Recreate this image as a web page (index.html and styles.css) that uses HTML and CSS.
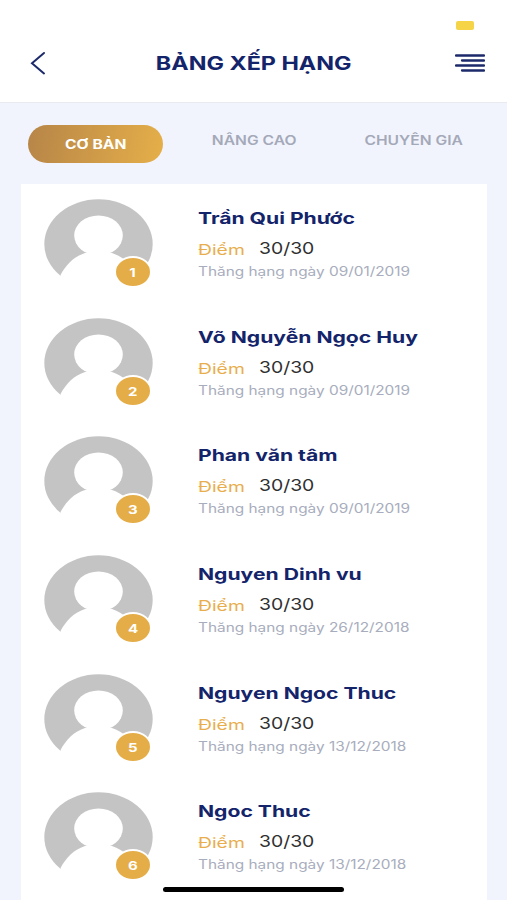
FILE: index.html
```
<!DOCTYPE html>
<html lang="vi">
<head>
    <meta charset="UTF-8">
    <title>Bảng xếp hạng</title>
    <link rel="stylesheet" href="styles.css">
</head>
<body>
    <div class="app">
        <div class="status"><span class="battery"></span></div>
        <div class="header">
            <svg class="back" width="16" height="24" viewBox="0 0 16 24"><path d="M14 2L2 12.2L14 22.4"/></svg>
            <h1><span>BẢNG XẾP HẠNG</span></h1>
            <svg class="menu" width="30" height="20" viewBox="0 0 30 20"><path d="M1 2.5H29M7 7.5H29M1 12.5H29M7 17.5H29"/></svg>
        </div>
        <div class="tabs">
            <div class="tab on"><span>CƠ BẢN</span></div>
            <div class="tab"><span>NÂNG CAO</span></div>
            <div class="tab"><span>CHUYÊN GIA</span></div>
        </div>
        <div class="list"></div>
        <div class="home-bar"></div>
    </div>
    <script>
        {
            let users = [
                    ["Trần Qui Phước", "09/01/2019"],
                    ["Võ Nguyễn Ngọc Huy", "09/01/2019"],
                    ["Phan văn tâm", "09/01/2019"],
                    ["Nguyen Dinh vu", "26/12/2018"],
                    ["Nguyen Ngoc Thuc", "13/12/2018"],
                    ["Ngoc Thuc", "13/12/2018"]
                ],
                oList = document.querySelector(".list");
            users.forEach(function (user, i) {
                oList.innerHTML += `
                <div class="row">
                    <div class="avatar">
                        <svg width="109" height="90" viewBox="0 0 109 90">
                            <ellipse class="ring" cx="54.5" cy="45" rx="54.2" ry="44.7"/>
                            <ellipse class="person" cx="54.5" cy="36.5" rx="24.3" ry="20"/>
                            <path class="person" d="M16.5 76C22 66 29 58 41 54H68C80 58 87 66 92.5 76V90H16.5Z"/>
                        </svg>
                        <span class="rank"><b>${i + 1}</b></span>
                    </div>
                    <div class="info">
                        <div class="name">${user[0]}</div>
                        <div class="score"><span class="label">Điểm</span><span class="point">30/30</span></div>
                        <div class="date">Thăng hạng ngày ${user[1]}</div>
                    </div>
                </div>`;
            });
        }
    </script>
</body>
</html>
```
FILE: styles.css
```
*{
    box-sizing: border-box;
}
body{
    margin: 0;
    font-family: Inter, "Open Sans", sans-serif;
    background-color: #f2f4fd;
}
.app{
    position: relative;
    width: 507px;
    height: 900px;
    overflow: hidden;
}
/**顶部**/
.status{
    display: flex;
    justify-content: flex-end;
    height: 40px;
    padding: 21px 33px 0 0;
    background-color: white;
}
.battery{
    width: 18px;
    height: 9px;
    border-radius: 2px;
    background-color: #f5d547;
}
.header{
    display: flex;
    justify-content: space-between;
    align-items: center;
    height: 63px;
    padding: 0 22px 17px 30px;
    border-bottom: 1px solid #e9eaf0;
    background-color: white;
}
.header svg{
    fill: none;
    stroke: #1c2a6b;
    stroke-width: 2;
    stroke-linecap: round;
}
.header .menu{
    stroke-width: 2.3;
}
.header h1{
    margin: 0 0 0 7px;
    font-size: 18.5px;
    font-weight: 700;
    color: #14246b;
}
.header h1 span{
    display: block;
    transform: scaleX(1.26);
}
/**选项卡**/
.tabs{
    display: flex;
    height: 81px;
    padding: 22px 0 0 28px;
}
.tab{
    width: 159px;
    height: 32px;
    line-height: 32px;
    text-align: center;
    font-size: 12.6px;
    font-weight: 600;
    color: #a4a9b9;
}
.tab span{
    display: inline-block;
    transform: scaleX(1.24);
}
.tab.on{
    width: 135px;
    height: 38px;
    margin-right: 12px;
    line-height: 39px;
    border-radius: 19px;
    font-weight: 700;
    color: white;
    background: linear-gradient(100deg, #b78548, #e5af49);
}
/**排行列表**/
.list{
    width: 466px;
    height: 716px;
    margin-left: 21px;
    overflow: hidden;
    background-color: white;
}
.row{
    display: flex;
    height: 118.7px;
    padding: 15px 0 0 23px;
}
.avatar{
    position: relative;
    width: 109px;
    height: 90px;
}
.avatar svg{
    display: block;
}
.ring{
    fill: #c4c4c4;
}
.person{
    fill: white;
}
.rank{
    position: absolute;
    left: 70px;
    top: 57px;
    width: 38px;
    height: 32px;
    border: 2px solid white;
    border-radius: 50%;
    line-height: 29px;
    text-align: center;
    font-size: 12px;
    color: white;
    background-color: #e5ad48;
}
.rank b{
    display: inline-block;
    transform: scaleX(1.25);
}
.info{
    margin-left: 45px;
    padding-top: 7px;
    white-space: nowrap;
}
.name,.label,.point,.date{
    transform-origin: 0 50%;
}
.name{
    height: 24px;
    line-height: 24px;
    font-size: 16px;
    font-weight: 700;
    color: #14246b;
    transform: scaleX(1.32);
}
.score{
    display: flex;
    height: 32px;
    padding-top: 3px;
    line-height: 30px;
}
.label{
    width: 61px;
    padding-top: 2px;
    font-size: 14px;
    color: #e8ae4e;
    transform: scaleX(1.38);
}
.point{
    font-size: 16px;
    color: #303030;
    transform: scaleX(1.21);
}
.date{
    height: 20px;
    line-height: 20px;
    font-size: 12.5px;
    color: #a8adbd;
    transform: scaleX(1.23);
}
/**底部横条**/
.home-bar{
    position: absolute;
    left: 163px;
    bottom: 8px;
    width: 181px;
    height: 5px;
    border-radius: 3px;
    background-color: black;
}
```
